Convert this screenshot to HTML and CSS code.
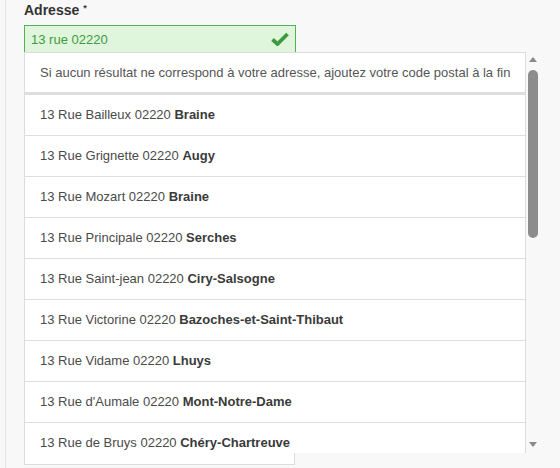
FILE: index.html
```html
<!DOCTYPE html>
<html lang="fr">
<head>
<meta charset="utf-8">
<link rel="stylesheet" href="styles.css">
</head>
<body>
<div class="panel">
  <div class="field">
    <label class="label">Adresse <sup class="req">*</sup></label>
    <div class="input">
      <span class="value">13 rue 02220</span>
      <svg class="check" width="18" height="14" viewBox="0 0 18 14"><path d="M1.5 7.5 L6.5 12 L16.5 2" fill="none" stroke="#3e9a3e" stroke-width="3.8" stroke-linejoin="miter"/></svg>
    </div>
    <div class="dropdown">
      <div class="list">
        <div class="hint">Si aucun résultat ne correspond à votre adresse, ajoutez votre code postal à la fin</div>
        <div class="row">13 Rue Bailleux 02220 <b>Braine</b></div>
        <div class="row">13 Rue Grignette 02220 <b>Augy</b></div>
        <div class="row">13 Rue Mozart 02220 <b>Braine</b></div>
        <div class="row">13 Rue Principale 02220 <b>Serches</b></div>
        <div class="row">13 Rue Saint-jean 02220 <b>Ciry-Salsogne</b></div>
        <div class="row">13 Rue Victorine 02220 <b>Bazoches-et-Saint-Thibaut</b></div>
        <div class="row">13 Rue Vidame 02220 <b>Lhuys</b></div>
        <div class="row">13 Rue d'Aumale 02220 <b>Mont-Notre-Dame</b></div>
        <div class="row">13 Rue de Bruys 02220 <b>Chéry-Chartreuve</b></div>
      </div>
      <div class="scrollbar">
        <span class="arrow up"></span>
        <span class="thumb"></span>
        <span class="arrow down"></span>
      </div>
    </div>
    <div class="under"></div>
  </div>
</div>
</body>
</html>
```

FILE: styles.css
```css
html, body {
  margin: 0;
  padding: 0;
  background: #f8f8f8;
  height: 100%;
  overflow: hidden;
}
body {
  font-family: "Liberation Sans", Arial, sans-serif;
  color: #333;
}
.panel {
  margin-left: 5px;
  border-left: 1px solid #e2e2e2;
  height: 468px;
  padding: 0 0 0 18px;
}
.field {
  display: flex;
  flex-direction: column;
  align-items: flex-start;
}
.label {
  font-size: 14px;
  font-weight: bold;
  color: #333;
  line-height: 16px;
  height: 18px;
  padding-top: 2px;
  margin-bottom: 5px;
  display: block;
}
.req {
  font-size: 9px;
  vertical-align: top;
  position: relative;
  top: -2px;
}
.input {
  box-sizing: border-box;
  width: 272px;
  height: 28px;
  border: 1px solid #53b153;
  background: #dff5dc;
  display: flex;
  align-items: center;
  justify-content: space-between;
  padding: 0 6px 0 6px;
}
.value {
  font-size: 13px;
  color: #3f9a3f;
}
.check {
  display: block;
}
.dropdown {
  display: flex;
  margin-top: -1px;
  height: 401px;
}
.list {
  box-sizing: border-box;
  width: 502px;
  background: #fff;
  border: 1px solid #dcdcdc;
  border-bottom: none;
  overflow: hidden;
}
.hint {
  height: 39px;
  line-height: 39px;
  padding-left: 15px;
  font-size: 13px;
  color: #555;
  border-bottom: 3px solid #dedede;
  white-space: nowrap;
}
.row {
  height: 40px;
  line-height: 40px;
  padding-left: 15px;
  font-size: 13px;
  color: #4a4a4a;
  border-bottom: 1px solid #dedede;
  white-space: nowrap;
}
.row b {
  color: #3a3a3a;
}
.scrollbar {
  width: 14px;
  display: flex;
  flex-direction: column;
  align-items: center;
  padding-top: 5px;
}
.arrow {
  width: 0;
  height: 0;
  border-left: 4px solid transparent;
  border-right: 4px solid transparent;
}
.arrow.up {
  border-bottom: 5px solid #8a8a8a;
}
.arrow.down {
  border-top: 5px solid #8a8a8a;
  margin-top: 204px;
}
.thumb {
  width: 10px;
  height: 168px;
  margin-top: 8px;
  border-radius: 5px;
  background: #8c8c8c;
}
.under {
  box-sizing: border-box;
  width: 271px;
  height: 12px;
  background: #fff;
  border: 1px solid #dcdcdc;
  border-top: none;
}
```
